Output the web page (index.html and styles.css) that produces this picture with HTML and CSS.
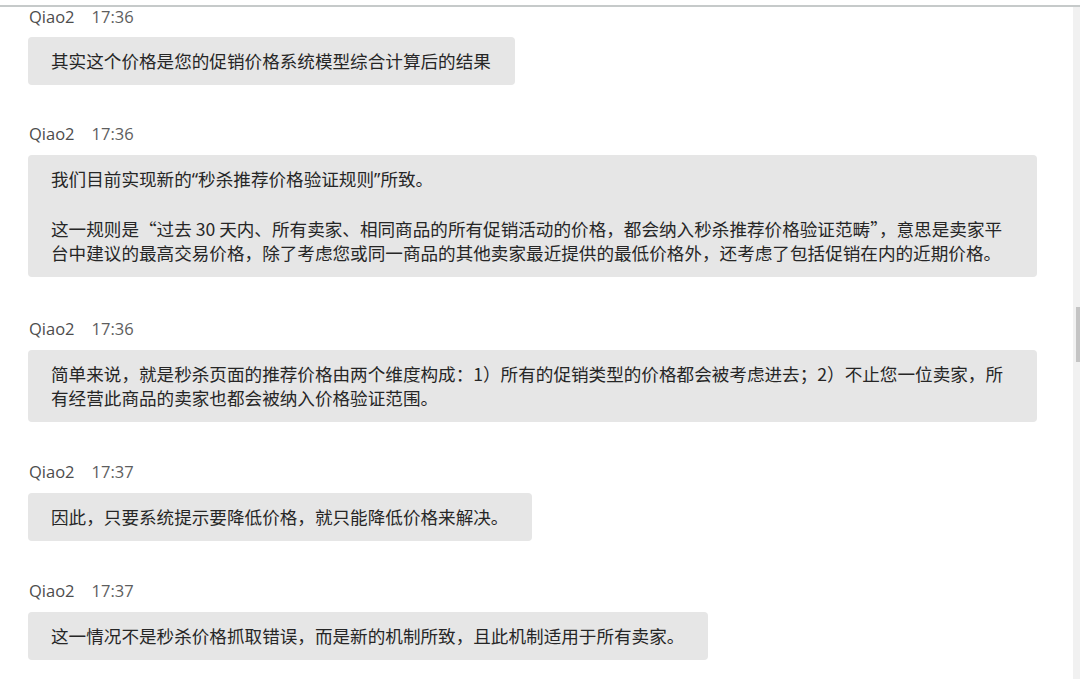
FILE: index.html
```html
<!DOCTYPE html>
<html lang="zh-CN">
<head>
<meta charset="utf-8">
<title>Chat</title>
<link rel="stylesheet" href="styles.css">
</head>
<body>
<div class="top-space"></div>
<div class="frame">
  <div class="chat">
    <div class="msg first">
      <div class="meta"><span class="name">Qiao2</span><span class="time">17:36</span></div>
      <div class="bubble">其实这个价格是您的促销价格系统模型综合计算后的结果</div>
    </div>
    <div class="msg second">
      <div class="meta"><span class="name">Qiao2</span><span class="time">17:36</span></div>
      <div class="bubble wide">
        <p class="para">我们目前实现新的<span class="q">“</span>秒杀推荐价格验证规则<span class="q">”</span>所致。</p>
        <p class="para"><span class="line">这一规则是“过去 30 天内、所有卖家、相同商品的所有促销活动的价格，都会纳入秒杀推荐价格验证范畴”，意思是卖家平</span><br><span class="line">台中建议的最高交易价格，除了考虑您或同一商品的其他卖家最近提供的最低价格外，还考虑了包括促销在内的近期价格。</span></p>
      </div>
    </div>
    <div class="msg">
      <div class="meta"><span class="name">Qiao2</span><span class="time">17:36</span></div>
      <div class="bubble wide"><span class="line">简单来说，就是秒杀页面的推荐价格由两个维度构成：1）所有的促销类型的价格都会被考虑进去；2）不止您一位卖家，所</span><br><span class="line">有经营此商品的卖家也都会被纳入价格验证范围。</span></div>
    </div>
    <div class="msg">
      <div class="meta"><span class="name">Qiao2</span><span class="time">17:37</span></div>
      <div class="bubble">因此，只要系统提示要降低价格，就只能降低价格来解决。</div>
    </div>
    <div class="msg">
      <div class="meta"><span class="name">Qiao2</span><span class="time">17:37</span></div>
      <div class="bubble">这一情况不是秒杀价格抓取错误，而是新的机制所致，且此机制适用于所有卖家。</div>
    </div>
  </div>
  <div class="scrollbar"><div class="thumb"></div></div>
</div>
</body>
</html>
```
FILE: styles.css
```css
html, body {
  margin: 0;
  padding: 0;
  background: #ffffff;
  height: 100%;
  overflow: hidden;
}
body {
  font-family: "Noto Sans CJK SC", "Noto Sans", sans-serif;
  color: #262626;
}
.top-space {
  height: 5px;
  background: #ffffff;
}
.frame {
  display: flex;
  border-top: 2px solid #c6caca;
  height: 672px;
}
.chat {
  flex: 1;
  padding-left: 28px;
  display: flex;
  flex-direction: column;
  align-items: flex-start;
}
.msg {
  display: flex;
  flex-direction: column;
  align-items: flex-start;
  margin-bottom: 40px;
}
.msg.first {
  margin-bottom: 39px;
}
.msg.first .bubble {
  margin-top: -1px;
}
.msg.second {
  margin-bottom: 42px;
}
.meta {
  height: 20px;
  line-height: 20px;
  margin-bottom: 11px;
  font-family: "Open Sans", "Noto Sans", sans-serif;
  font-size: 16.5px;
  color: #4d4d4d;
  padding-left: 1px;
  display: flex;
  gap: 17px;
}
.time {
  color: #5e5e5e;
}
.bubble {
  background: #e6e6e6;
  border-radius: 4px;
  padding: 12px 24px 12px 23px;
  font-size: 17.6px;
  line-height: 24px;
  white-space: nowrap;
}
.bubble.wide {
  width: 1009px;
  box-sizing: border-box;
}
.q {
  font-family: "Noto Sans", sans-serif;
}
.para {
  margin: 0;
}
.para + .para {
  margin-top: 26px;
}
.scrollbar {
  width: 7px;
  background: #f1f1f1;
  display: flex;
  flex-direction: column;
  align-items: flex-end;
}
.thumb {
  margin-top: 300px;
  width: 4px;
  height: 55px;
  background: #c4c4c4;
}
```
